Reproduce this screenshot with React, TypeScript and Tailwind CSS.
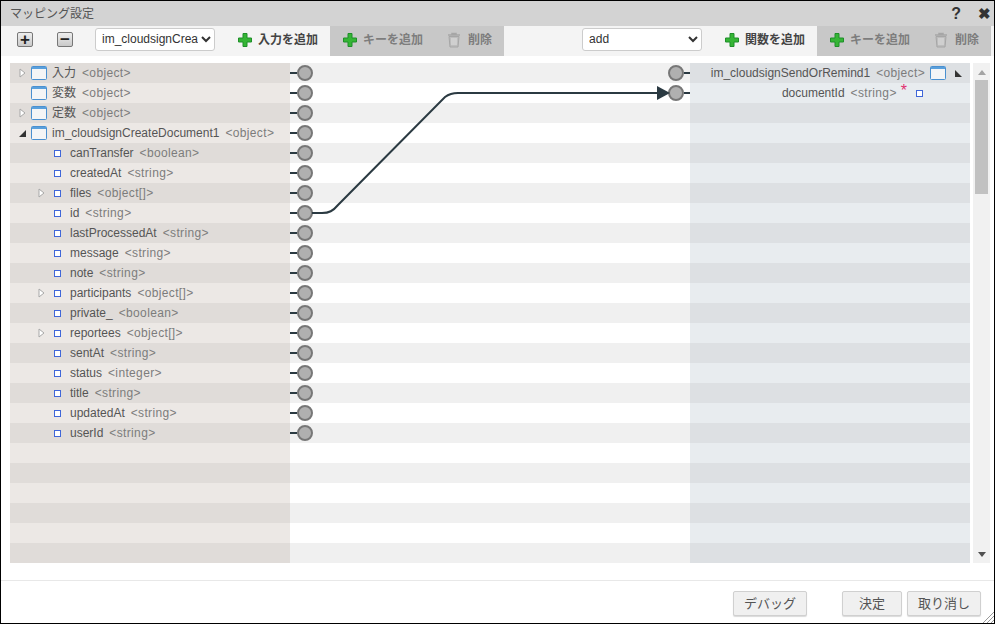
const cjk = "font-['Liberation_Sans','Noto_Sans_CJK_JP',sans-serif]";

type Row = {
  name?: string;
  type?: string;
  depth?: number;
  toggle?: "closed" | "open";
  folder?: boolean;
};

const rows: Row[] = [
  { name: "入力", type: "<object>", toggle: "closed", folder: true },
  { name: "変数", type: "<object>", folder: true },
  { name: "定数", type: "<object>", toggle: "closed", folder: true },
  { name: "im_cloudsignCreateDocument1", type: "<object>", toggle: "open", folder: true },
  { name: "canTransfer", type: "<boolean>", depth: 1 },
  { name: "createdAt", type: "<string>", depth: 1 },
  { name: "files", type: "<object[]>", depth: 1, toggle: "closed" },
  { name: "id", type: "<string>", depth: 1 },
  { name: "lastProcessedAt", type: "<string>", depth: 1 },
  { name: "message", type: "<string>", depth: 1 },
  { name: "note", type: "<string>", depth: 1 },
  { name: "participants", type: "<object[]>", depth: 1, toggle: "closed" },
  { name: "private_", type: "<boolean>", depth: 1 },
  { name: "reportees", type: "<object[]>", depth: 1, toggle: "closed" },
  { name: "sentAt", type: "<string>", depth: 1 },
  { name: "status", type: "<integer>", depth: 1 },
  { name: "title", type: "<string>", depth: 1 },
  { name: "updatedAt", type: "<string>", depth: 1 },
  { name: "userId", type: "<string>", depth: 1 },
  {},
  {},
  {},
  {},
  {},
  {},
];

function PlusIcon() {
  return (
    <svg width="16" height="16" viewBox="0 0 16 16" className="shrink-0">
      <path
        d="M6 1.500h4v4.500h4.500v4H10v4.500H6V10H1.500V6H6z"
        fill="#35b535"
        stroke="#1f8f2a"
        strokeWidth="1"
      />
    </svg>
  );
}

function TrashIcon() {
  return (
    <svg width="14" height="16" viewBox="0 0 14 16" className="mr-[2px] shrink-0">
      <path d="M1 3h12M5 3V1.500h4V3" fill="none" stroke="#a6a6a6" strokeWidth="1.500" />
      <path d="M2 4.500h10l-1 10.500H3z" fill="#bdbdbd" stroke="#a6a6a6" />
      <path d="M5 6v7M7 6v7M9 6v7" stroke="#e2e2e2" />
    </svg>
  );
}

function FolderIcon() {
  return (
    <svg width="16" height="14" viewBox="0 0 16 14" className="shrink-0">
      <rect x="0.500" y="0.500" width="15" height="13" rx="1" fill="#f4f5f6" stroke="#4a90d0" />
      <rect x="1" y="1" width="14" height="2" fill="#5aa0dc" />
    </svg>
  );
}

function ClosedArrow() {
  return (
    <svg width="7" height="10" viewBox="0 0 7 10" className="shrink-0">
      <path d="M1 1l5 4-5 4z" fill="#fff" stroke="#a8a8a8" />
    </svg>
  );
}

function OpenArrow() {
  return (
    <svg width="7" height="7" viewBox="0 0 7 7" className="shrink-0">
      <path d="M7 0v7H0z" fill="#333" />
    </svg>
  );
}

function OpenFlipped() {
  return (
    <svg width="7" height="7" viewBox="0 0 7 7" className="block">
      <path d="M0 0v7h7z" fill="#333" />
    </svg>
  );
}

function Leaf() {
  return <span className="h-[7px] w-[7px] shrink-0 border border-[#3f66d8] bg-white" />;
}

function Node() {
  return (
    <span className="h-[16px] w-[16px] shrink-0 rounded-full border-2 border-[#777] bg-[#b0b0b0]" />
  );
}

function ToolButton({ label, dim, icon }: { label: string; dim?: boolean; icon: "plus" | "trash" }) {
  return (
    <span className={`flex items-center gap-[5px] text-xs font-bold ${dim ? "text-[#7d7d7d]" : "text-[#444]"}`}>
      {icon === "plus" ? <PlusIcon /> : <TrashIcon />}
      {label}
    </span>
  );
}

function Square({ children }: { children: string }) {
  return (
    <span className="flex h-[15px] w-[16px] items-center justify-center rounded-[2px] border border-[#777] bg-gradient-to-b from-[#eeeeee] to-[#c9c9c9] text-[17px] leading-none font-bold text-[#222]">
      {children}
    </span>
  );
}

function TypeLabel({ children }: { children?: string }) {
  return <span className="tracking-[0.35px] text-[#7c7c7c]">{children}</span>;
}

function LeftCell({ row, odd }: { row: Row; odd: boolean }) {
  return (
    <div className={`flex w-[280px] items-center text-xs ${odd ? "bg-[#e0dcd9]" : "bg-[#ece8e5]"}`}>
      {row.name && (
        <>
          <span className={`flex shrink-0 items-center justify-end ${row.depth ? "w-[35px]" : "w-[21px] pr-[5px]"}`}>
            {row.toggle === "closed" && <ClosedArrow />}
            {row.toggle === "open" && <OpenArrow />}
          </span>
          {row.folder ? (
            <span className="flex items-center gap-[5px]">
              <FolderIcon />
              <span className="text-[#555]">{row.name}</span>
            </span>
          ) : (
            <span className="ml-[9px] flex items-center gap-[9px]">
              <Leaf />
              <span className="text-[#555]">{row.name}</span>
            </span>
          )}
          <span className="ml-[6px]">
            <TypeLabel>{row.type}</TypeLabel>
          </span>
        </>
      )}
    </div>
  );
}

function MidCell({ row, index, odd }: { row: Row; index: number; odd: boolean }) {
  return (
    <div className={`flex flex-1 items-center justify-between ${odd ? "bg-[#f0f0f0]" : "bg-white"}`}>
      {row.name ? (
        <span className="flex items-center">
          <span className="h-[2px] w-[7px] bg-[#2b3a42]" />
          <Node />
        </span>
      ) : (
        <span />
      )}
      {index < 2 && (
        <span className="flex items-center">
          <Node />
          <span className="h-[2px] w-[6px] bg-[#2b3a42]" />
        </span>
      )}
    </div>
  );
}

function RightCell({ index, odd }: { index: number; odd: boolean }) {
  return (
    <div className={`flex w-[280px] items-center justify-end text-xs ${odd ? "bg-[#dde0e3]" : "bg-[#e8ecef]"}`}>
      {index === 0 && (
        <>
          <span className="text-[#555]">im_cloudsignSendOrRemind1</span>
          <span className="ml-[6px]">
            <TypeLabel>{"<object>"}</TypeLabel>
          </span>
          <span className="ml-[5px]">
            <FolderIcon />
          </span>
          <span className="mr-[8px] ml-[9px]">
            <OpenFlipped />
          </span>
        </>
      )}
      {index === 1 && (
        <>
          <span className="text-[#555]">documentId</span>
          <span className="ml-[6px]">
            <TypeLabel>{"<string>"}</TypeLabel>
          </span>
          <span className="relative -top-[2px] ml-[4px] text-[16px] leading-none text-[#e03070]">*</span>
          <span className="mr-[47px] ml-[9px] flex">
            <Leaf />
          </span>
        </>
      )}
    </div>
  );
}

export default function App() {
  return (
    <div className={`flex h-[624px] w-[995px] flex-col overflow-hidden border border-black bg-white ${cjk}`}>
      {/* title bar */}
      <div className="flex h-[25px] shrink-0 items-center justify-between bg-[#d3d3d3] pr-[3px] pl-[9px]">
        <span className="text-xs text-[#555]">マッピング設定</span>
        <span className="flex items-center gap-[17px] text-[#333]">
          <span className="text-[16px] leading-none font-bold">?</span>
          <span className="text-[15px] leading-none font-bold">✖</span>
        </span>
      </div>

      {/* toolbar */}
      <div className="flex h-[30px] shrink-0 items-start bg-[#f4f4f4]">
        <div className="flex h-[26px] items-center pl-[16px]">
          <Square>+</Square>
          <span className="ml-[24px]">
            <Square>−</Square>
          </span>
          <select className="ml-[22px] h-[23px] w-[120px] rounded-[3px] border border-[#ccc] bg-white pl-[2px] text-xs text-[#333]">
            <option>im_cloudsignCreateDocument1</option>
          </select>
        </div>
        <div className="flex h-[28px] items-center pl-[22px]">
          <ToolButton icon="plus" label="入力を追加" />
        </div>
        <div className="ml-[12px] flex h-[30px] items-center gap-[24px] bg-[#c8c8c8] pr-[12px] pb-[2px] pl-[12px]">
          <ToolButton icon="plus" dim label="キーを追加" />
          <ToolButton icon="trash" dim label="削除" />
        </div>
        <div className="ml-[78px] flex h-[26px] items-center">
          <select className="h-[23px] w-[120px] rounded-[3px] border border-[#ccc] bg-white pl-[2px] text-xs text-[#333]">
            <option>add</option>
          </select>
        </div>
        <div className="flex h-[28px] items-center pl-[22px]">
          <ToolButton icon="plus" label="関数を追加" />
        </div>
        <div className="ml-[12px] flex h-[30px] items-center gap-[24px] bg-[#c8c8c8] pr-[12px] pb-[2px] pl-[12px]">
          <ToolButton icon="plus" dim label="キーを追加" />
          <ToolButton icon="trash" dim label="削除" />
        </div>
      </div>

      {/* mapping area */}
      <div className="flex flex-1 items-start pt-[7px] pl-[9px]">
        <div className="relative flex w-[960px] flex-col">
          {rows.map((row, i) => (
            <div key={i} className="flex h-[20px]">
              <LeftCell row={row} odd={i % 2 === 0} />
              <MidCell row={row} index={i} odd={i % 2 === 0} />
              <RightCell index={i} odd={i % 2 === 0} />
            </div>
          ))}
          <svg width="400" height="160" viewBox="0 0 400 160" className="absolute top-0 left-[280px]">
            <path
              d="M22 150h10c7 0 11-2 16-8L155 34c4-3 8-4 13-4H370"
              fill="none"
              stroke="#2b3a42"
              strokeWidth="2"
            />
            <path d="M367 23l13 7-13 7z" fill="#2b3a42" />
          </svg>
        </div>

        {/* scrollbar */}
        <div className="ml-[3px] flex h-[500px] w-[17px] flex-col items-center bg-[#f1f1f1]">
          <span className="mt-[7px] mb-[5px] h-0 w-0 border-x-[4px] border-b-[5px] border-x-transparent border-b-[#a3a3a3]" />
          <span className="h-[114px] w-[13px] bg-[#c1c1c1]" />
          <span className="mt-auto mb-[6px] h-0 w-0 border-x-[4px] border-t-[5px] border-x-transparent border-t-[#505050]" />
        </div>
      </div>

      {/* footer */}
      <div className="relative flex h-[43px] shrink-0 items-start justify-end border-t border-[#e8e8e8] pt-[10px] pr-[13px]">
        <button className="mr-[35px] h-[25px] w-[74px] rounded-[2px] border border-[#d0d0d0] bg-[#f0f0f0] text-[13px] text-[#555] shadow-[0_1px_1px_rgba(0,0,0,0.15)]">
          デバッグ
        </button>
        <button className="mr-[5px] h-[25px] w-[60px] rounded-[2px] border border-[#d0d0d0] bg-[#f0f0f0] text-[13px] text-[#555] shadow-[0_1px_1px_rgba(0,0,0,0.15)]">
          決定
        </button>
        <button className="h-[25px] w-[74px] rounded-[2px] border border-[#d0d0d0] bg-[#f0f0f0] text-[13px] text-[#555] shadow-[0_1px_1px_rgba(0,0,0,0.15)]">
          取り消し
        </button>
        <svg width="12" height="12" viewBox="0 0 12 12" className="absolute right-0 bottom-0">
          <path d="M1 12L12 1M5 12l7-7M9 12l3-3" stroke="#999" strokeWidth="1" />
        </svg>
      </div>
    </div>
  );
}
